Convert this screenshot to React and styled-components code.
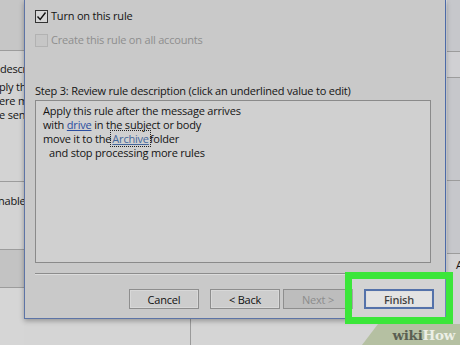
import React from "react";
import styled, { createGlobalStyle } from "styled-components";

const GlobalStyle = createGlobalStyle`
  body {
    margin: 0;
    background: #d4d4d4;
    font-family: "Open Sans", "Noto Sans", sans-serif;
  }
`;

const Page = styled.div`
  position: relative;
  width: 460px;
  height: 345px;
  overflow: hidden;
  display: grid;
  grid-template-columns: 24px 422px 14px;
  grid-template-rows: 319px 26px;
  font-size: 11px;
  letter-spacing: -0.2px;
  color: #141414;
`;

const LeftStrip = styled.div`
  grid-column: 1;
  grid-row: 1 / 3;
  display: flex;
  flex-direction: column;
  overflow: hidden;
`;

const Band = styled.div`
  height: ${props => props.h}px;
  flex: ${props => (props.h ? "none" : "1")};
  background: ${props => props.bg || "#d3d3d3"};
  border-bottom: ${props => (props.line ? "1px solid #9c9c9c" : "none")};
  padding-top: ${props => props.pt || 0}px;
  box-sizing: border-box;
  overflow: hidden;
`;

const Scrap = styled.div`
  line-height: 14px;
  white-space: nowrap;
  margin-left: ${props => props.shift || 0}px;
  margin-bottom: ${props => props.mb || 0}px;
`;

const Dialog = styled.div`
  grid-column: 2;
  grid-row: 1;
  position: relative;
  z-index: 1;
  background: #c9c9c9;
  border-left: 1px solid #5d74a6;
  border-right: 1px solid #4c6aa8;
  border-bottom: 1px solid #5d74a6;
  box-shadow: 0 2px 5px rgba(0, 0, 0, 0.3);
  padding: 9px 0 0 10px;
  display: flex;
  flex-direction: column;
`;

const CheckRow = styled.label`
  display: flex;
  align-items: center;
  gap: 3px;
  height: 14px;
  line-height: 14px;
  margin-top: ${props => props.mt || 0}px;
  color: ${props => (props.disabled ? "#8e8e8e" : "#141414")};
`;

const Box = styled.span`
  width: 13px;
  height: 13px;
  box-sizing: border-box;
  border: 1px solid ${props => (props.disabled ? "#b2b2b2" : "#333")};
  background: ${props => (props.disabled ? "#c6c6c6" : "#d6d6d6")};
  display: flex;
  align-items: center;
  justify-content: center;
`;

const StepLabel = styled.div`
  margin-top: 37px;
  line-height: 14px;
`;

const Description = styled.div`
  margin-top: 2px;
  margin-right: 14px;
  height: 163px;
  box-sizing: border-box;
  border: 1px solid #8a8a8a;
  background: #d0d0d0;
  padding: 3px 0 0 7px;
`;

const Line = styled.div`
  line-height: 14px;
  padding-left: ${props => (props.indent ? 6 : 0)}px;
  white-space: nowrap;
`;

const Link = styled.span`
  color: #2b4ea0;
  text-decoration: underline;
`;

const FocusLink = styled.span`
  color: #46679a;
  text-decoration: underline;
  outline: 1px dotted #222;
  padding: 0 1px;
`;

const Separator = styled.div`
  margin-top: 10px;
  margin-right: 14px;
  height: 1px;
  background: #8c8c8c;
  border-bottom: 1px solid #dcdcdc;
`;

const ButtonRow = styled.div`
  margin-top: 14px;
  padding-right: 11px;
  display: flex;
  justify-content: flex-end;
  gap: 11px;
`;

const Pair = styled.div`
  display: flex;
  gap: 3px;
`;

const Button = styled.button`
  width: 70px;
  height: 20px;
  box-sizing: border-box;
  padding: 0;
  font-family: inherit;
  font-size: 11px;
  letter-spacing: -0.2px;
  border: ${props => (props.primary ? "2px solid #2a4f95" : "1px solid #8e8e8e")};
  background: ${props =>
    props.primary ? "#dcdcdc" : props.disabled ? "#bdbdbd" : "#cdcdcd"};
  color: ${props => (props.disabled ? "#8c8c8c" : "#111")};
  font-weight: ${props => (props.primary ? 600 : 400)};
  box-shadow: ${props => (props.disabled ? "none" : "inset 0 0 0 1px #d8d8d8")};
`;

const BelowDialog = styled.div`
  grid-column: 2;
  grid-row: 2;
  display: flex;
  background: #d5d5d5;
`;

const BelowLeft = styled.div`
  width: 166px;
  border-right: 1px solid #9a9a9a;
`;

const RightStrip = styled.div`
  grid-column: 3;
  grid-row: 1 / 3;
  display: flex;
  flex-direction: column;
  background: #c6c7cb;
  border-left: 1px solid #dcdde0;
  overflow: hidden;
`;

const Highlight = styled.div`
  position: absolute;
  left: 345px;
  top: 272px;
  width: 108px;
  height: 52px;
  box-sizing: border-box;
  border: 7px solid #3be63a;
  background: rgba(255, 255, 255, 0.2);
  z-index: 2;
`;

const Watermark = styled.div`
  position: absolute;
  right: 0;
  bottom: 0;
  width: 98px;
  height: 21px;
  z-index: 2;
  background: #b5c0a2;
  clip-path: polygon(0 100%, 16px 0, 100% 0, 100% 100%);
  display: flex;
  align-items: center;
  justify-content: flex-end;
  padding: 1px 5px 0 0;
  box-sizing: border-box;
  font-family: "DejaVu Serif", "Liberation Serif", serif;
  font-weight: bold;
  font-size: 13.5px;
  letter-spacing: -0.3px;
`;

const Wiki = styled.span`
  color: #5a5f52;
`;

const How = styled.span`
  color: #eceFE6;
`;

const Check = () => (
  <svg width="11" height="11" viewBox="0 0 11 11">
    <polyline points="1.5,5.5 4.2,8.5 9.5,1.5" fill="none" stroke="#111" strokeWidth="1.4" />
  </svg>
);

export default function App() {
  return (
    <>
      <GlobalStyle />
      <Page>
        <LeftStrip>
          <Band h={51} bg="#c6c6c6" line />
          <Band h={131} line pt={11}>
            <Scrap mb={4}>descr</Scrap>
            <Scrap shift={-1}>ply th</Scrap>
            <Scrap shift={-1}>ere m</Scrap>
            <Scrap shift={-1}>e sen</Scrap>
          </Band>
          <Band h={68} line pt={12}>
            <Scrap shift={-2}>nable</Scrap>
          </Band>
          <Band h={38} bg="#c3c3c3" line />
          <Band bg="#d6d6d6" />
        </LeftStrip>

        <Dialog>
          <CheckRow>
            <Box>
              <Check />
            </Box>
            Turn on this rule
          </CheckRow>
          <CheckRow disabled mt={10}>
            <Box disabled />
            Create this rule on all accounts
          </CheckRow>

          <StepLabel>Step 3: Review rule description (click an underlined value to edit)</StepLabel>
          <Description>
            <Line>Apply this rule after the message arrives</Line>
            <Line>
              with <Link>drive</Link> in the subject or body
            </Line>
            <Line>
              move it to the<FocusLink>Archive</FocusLink>folder
            </Line>
            <Line indent>and stop processing more rules</Line>
          </Description>

          <Separator />

          <ButtonRow>
            <Button>Cancel</Button>
            <Pair>
              <Button>&lt; Back</Button>
              <Button disabled>Next &gt;</Button>
            </Pair>
            <Button primary>Finish</Button>
          </ButtonRow>
        </Dialog>

        <BelowDialog>
          <BelowLeft />
        </BelowDialog>

        <RightStrip>
          <Band h={52} bg="#c6c7cb" line />
          <Band h={26} bg="#d0d0d3" line />
          <Band h={103} bg="#c6c7cb" line />
          <Band h={73} bg="#c6c7cb" line />
          <Band bg="#d2d2d4" pt={4}>
            <Scrap shift={9}>A</Scrap>
          </Band>
        </RightStrip>

        <Highlight />
        <Watermark>
          <Wiki>wiki</Wiki>
          <How>How</How>
        </Watermark>
      </Page>
    </>
  );
}
